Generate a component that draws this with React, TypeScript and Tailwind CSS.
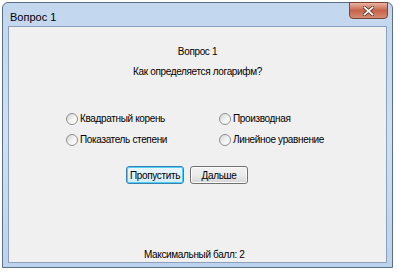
export default function App() {
  const font = { fontFamily: '"Liberation Sans", Arial, sans-serif' };
  return (
    <div className="w-[397px] h-[275px] bg-white pt-[2px] pl-[2px]" style={font}>
      <div className="w-[391px] h-[266px] rounded-t-[6px] border border-[#5a6f8a] bg-gradient-to-b from-[#c2d6ee] via-[#cfe0f3] to-[#bcd3ec] flex flex-col px-[5px] pb-[4px]">
        {/* title bar */}
        <div className="h-[23px] flex items-start justify-between shrink-0">
          <span className="text-[11px] text-black mt-[6px] ml-[2px]">Вопрос 1</span>
          <div className="w-[39px] h-[17px] -mt-[1px] -mr-[1px] rounded-b-[4px] border border-[#7a4436] bg-gradient-to-b from-[#e9b4a2] via-[#c6634a] to-[#d48a72] flex items-center justify-center">
            <svg width="11" height="10" viewBox="0 0 11 10">
              <path d="M1.5 1.5 L9.5 8.5 M9.5 1.5 L1.5 8.5" stroke="#4a2418" strokeWidth="3.2" strokeLinecap="square" />
              <path d="M1.5 1.5 L9.5 8.5 M9.5 1.5 L1.5 8.5" stroke="#ffffff" strokeWidth="1.8" strokeLinecap="square" />
            </svg>
          </div>
        </div>
        {/* client area */}
        <div className="flex-1 border border-[#8ba0bc] bg-[#f0f0f0] flex flex-col items-center text-[10px] leading-[13px] tracking-[-0.35px] text-black">
          <div className="mt-[18px]">Вопрос 1</div>
          <div className="mt-[7px]">Как определяется логарифм?</div>
          <div className="self-start grid grid-cols-[153px_110px] gap-y-[8px] mt-[34px] ml-[57px]">
            {['Квадратный корень', 'Производная', 'Показатель степени', 'Линейное уравнение'].map((t) => (
              <div key={t} className="flex items-center gap-[2px] h-[13px] whitespace-nowrap">
                <span className="w-[12px] h-[12px] rounded-full border border-[#8e8f8f] bg-gradient-to-br from-[#d2d2d2] via-[#f2f2f2] to-[#ffffff] shrink-0" />
                <span>{t}</span>
              </div>
            ))}
          </div>
          <div className="self-start flex gap-[6px] mt-[20px] ml-[117px]">
            <button className="w-[58px] h-[18px] rounded-[3px] border border-[#3c7fb1] bg-gradient-to-b from-[#eaf6fd] to-[#d3ecfa] text-[10px] tracking-[-0.35px] shadow-[inset_0_0_0_1px_#48d1f8]">
              Пропустить
            </button>
            <button className="w-[58px] h-[18px] rounded-[3px] border border-[#707070] bg-gradient-to-b from-[#f2f2f2] via-[#ebebeb] to-[#d5d5d5] text-[10px] tracking-[-0.35px] shadow-[inset_0_0_0_1px_#fcfcfc]">
              Дальше
            </button>
          </div>
          <div className="flex-1" />
          <div className="self-start mb-[1px] ml-[135px]">Максимальный балл: 2</div>
        </div>
      </div>
    </div>
  );
}
